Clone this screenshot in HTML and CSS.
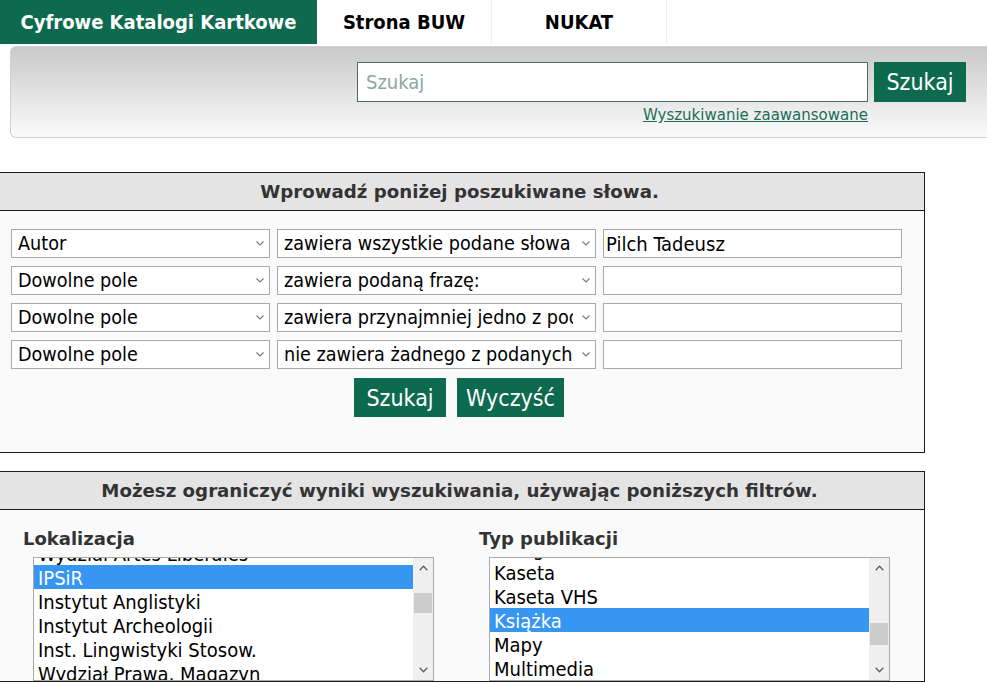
FILE: index.html
```html
<!DOCTYPE html>
<html lang="pl">
<head>
<meta charset="utf-8">
<title>Cyfrowe Katalogi Kartkowe</title>
<link rel="stylesheet" href="styles.css">
</head>
<body>
<nav class="topnav">
  <a class="tab tab-active" href="#">Cyfrowe Katalogi Kartkowe</a>
  <a class="tab" href="#">Strona BUW</a>
  <a class="tab" href="#">NUKAT</a>
</nav>

<header class="search-panel">
  <form class="quick-search">
    <input class="qs-input" type="text" placeholder="Szukaj">
    <button class="btn qs-btn" type="button">Szukaj</button>
    <a class="adv-link" href="#">Wyszukiwanie zaawansowane</a>
  </form>
</header>

<section class="box">
  <h2 class="box-head">Wprowadź poniżej poszukiwane słowa.</h2>
  <div class="query-body">
    <div class="qrows">
      <div class="qrow">
        <div class="sel sel-field"><select><option>Autor</option><option>Dowolne pole</option><option>Tytuł</option></select><svg class="chev" width="8" height="5" viewBox="0 0 8 5"><path d="M0.5 0.5 L4 4 L7.5 0.5" fill="none" stroke="#777" stroke-width="1.1"/></svg></div>
        <div class="sel sel-op"><select><option>zawiera wszystkie podane słowa</option></select><svg class="chev" width="8" height="5" viewBox="0 0 8 5"><path d="M0.5 0.5 L4 4 L7.5 0.5" fill="none" stroke="#777" stroke-width="1.1"/></svg></div>
        <input class="term" type="text" value="Pilch Tadeusz">
      </div>
      <div class="qrow">
        <div class="sel sel-field"><select><option>Dowolne pole</option></select><svg class="chev" width="8" height="5" viewBox="0 0 8 5"><path d="M0.5 0.5 L4 4 L7.5 0.5" fill="none" stroke="#777" stroke-width="1.1"/></svg></div>
        <div class="sel sel-op"><select><option>zawiera podaną frazę:</option></select><svg class="chev" width="8" height="5" viewBox="0 0 8 5"><path d="M0.5 0.5 L4 4 L7.5 0.5" fill="none" stroke="#777" stroke-width="1.1"/></svg></div>
        <input class="term" type="text">
      </div>
      <div class="qrow">
        <div class="sel sel-field"><select><option>Dowolne pole</option></select><svg class="chev" width="8" height="5" viewBox="0 0 8 5"><path d="M0.5 0.5 L4 4 L7.5 0.5" fill="none" stroke="#777" stroke-width="1.1"/></svg></div>
        <div class="sel sel-op"><select><option>zawiera przynajmniej jedno z podanych słów</option></select><svg class="chev" width="8" height="5" viewBox="0 0 8 5"><path d="M0.5 0.5 L4 4 L7.5 0.5" fill="none" stroke="#777" stroke-width="1.1"/></svg></div>
        <input class="term" type="text">
      </div>
      <div class="qrow">
        <div class="sel sel-field"><select><option>Dowolne pole</option></select><svg class="chev" width="8" height="5" viewBox="0 0 8 5"><path d="M0.5 0.5 L4 4 L7.5 0.5" fill="none" stroke="#777" stroke-width="1.1"/></svg></div>
        <div class="sel sel-op"><select><option>nie zawiera żadnego z podanych słów</option></select><svg class="chev" width="8" height="5" viewBox="0 0 8 5"><path d="M0.5 0.5 L4 4 L7.5 0.5" fill="none" stroke="#777" stroke-width="1.1"/></svg></div>
        <input class="term" type="text">
      </div>
    </div>
    <div class="actions">
      <button class="btn btn-search" type="button">Szukaj</button>
      <button class="btn btn-clear" type="button">Wyczyść</button>
    </div>
  </div>
</section>

<section class="box box-filters">
  <h2 class="box-head">Możesz ograniczyć wyniki wyszukiwania, używając poniższych filtrów.</h2>
  <div class="filters">
    <div class="filter">
      <h3 class="filter-label">Lokalizacja</h3>
      <div class="listbox">
        <ul class="lb-items lb-loc">
          <li>Wydział Artes Liberales</li>
          <li class="chosen">IPSiR</li>
          <li>Instytut Anglistyki</li>
          <li>Instytut Archeologii</li>
          <li>Inst. Lingwistyki Stosow.</li>
          <li>Wydział Prawa, Magazyn</li>
          <li>Wydział Polonistyki</li>
        </ul>
        <div class="lb-bar">
          <span class="lb-btn"><svg width="9" height="6" viewBox="0 0 9 6"><path d="M0.7 5.2 L4.5 1.2 L8.3 5.2" fill="none" stroke="#606060" stroke-width="1.3"/></svg></span>
          <span class="lb-track"><span class="lb-thumb" style="margin-top:15px;height:20px"></span></span>
          <span class="lb-btn"><svg width="9" height="6" viewBox="0 0 9 6"><path d="M0.7 0.8 L4.5 4.8 L8.3 0.8" fill="none" stroke="#606060" stroke-width="1.3"/></svg></span>
        </div>
      </div>
    </div>
    <div class="filter">
      <h3 class="filter-label">Typ publikacji</h3>
      <div class="listbox">
        <ul class="lb-items lb-type">
          <li>Fotografia</li>
          <li>Kaseta</li>
          <li>Kaseta VHS</li>
          <li class="chosen">Książka</li>
          <li>Mapy</li>
          <li>Multimedia</li>
          <li>Nuty</li>
        </ul>
        <div class="lb-bar">
          <span class="lb-btn"><svg width="9" height="6" viewBox="0 0 9 6"><path d="M0.7 5.2 L4.5 1.2 L8.3 5.2" fill="none" stroke="#606060" stroke-width="1.3"/></svg></span>
          <span class="lb-track"><span class="lb-thumb" style="margin-top:45px;height:22px"></span></span>
          <span class="lb-btn"><svg width="9" height="6" viewBox="0 0 9 6"><path d="M0.7 0.8 L4.5 4.8 L8.3 0.8" fill="none" stroke="#606060" stroke-width="1.3"/></svg></span>
        </div>
      </div>
    </div>
  </div>
</section>
</body>
</html>
```

FILE: styles.css
```css
* { box-sizing: border-box; }

body {
  margin: 0;
  background: #fff;
  color: #000;
  font-family: "DejaVu Sans", Verdana, sans-serif;
  overflow: hidden;
}

/* ---------- top navigation ---------- */
.topnav {
  display: flex;
  height: 44px;
}
.tab {
  display: flex;
  align-items: center;
  justify-content: center;
  width: 175px;
  border-right: 1px solid #eeeeee;
  color: #000;
  text-decoration: none;
  font-family: "DejaVu Sans Condensed", "DejaVu Sans", sans-serif;
  font-stretch: condensed;
  font-weight: bold;
  font-size: 20px;
}
.tab-active {
  width: 317px;
  background: #0e6a4e;
  color: #fff;
  border-right: 0;
}

/* ---------- quick search ---------- */
.search-panel {
  margin: 2px 0 0 10px;
  height: 92px;
  border: 1px solid #d2d2d2;
  border-right: 0;
  border-radius: 6px 0 0 6px;
  background: linear-gradient(#c9c9c9, #fbfbfb);
  display: flex;
  justify-content: flex-end;
  padding: 15px 21px 0 0;
}
.quick-search {
  display: grid;
  grid-template-columns: 511px 92px;
  column-gap: 6px;
  align-content: start;
}
.qs-input {
  height: 40px;
  border: 1px solid #4e6a61;
  background: #fff;
  padding: 0 8px;
  font-family: "DejaVu Sans Condensed", "DejaVu Sans", sans-serif;
  font-stretch: condensed;
  font-size: 20px;
  outline: none;
}
.qs-input::placeholder { color: #8ea79d; }
.qs-btn { height: 40px; }
.adv-link {
  grid-column: 1;
  justify-self: end;
  margin-top: 4px;
  font-size: 15px;
  line-height: 18px;
  color: #1e6c57;
  text-decoration: underline;
}

.btn {
  border: 0;
  padding: 0;
  background: #0e6a4e;
  color: #fff;
  font-family: "DejaVu Sans Condensed", "DejaVu Sans", sans-serif;
  font-stretch: condensed;
  font-size: 23px;
  cursor: pointer;
}

/* ---------- boxes ---------- */
.box {
  margin-top: 34px;
  width: 925px;
  border: 1px solid #1c1c1c;
  border-left: 0;
  background: #fafafa;
}
.box-filters { margin-top: 18px; }
.box-head {
  margin: 0;
  height: 38px;
  padding-right: 5px;
  display: flex;
  align-items: center;
  justify-content: center;
  background: #e4e4e4;
  border-bottom: 1px solid #1c1c1c;
  color: #333;
  font-size: 18.2px;
  font-weight: bold;
}

.query-body {
  padding: 18px 0 35px 11px;
}
.qrows {
  display: grid;
  row-gap: 8px;
}
.qrow {
  display: flex;
  gap: 7px;
}
.sel {
  position: relative;
  height: 29px;
}
.sel-field { width: 259px; }
.sel-op { width: 319px; }
.sel select {
  -webkit-appearance: none;
  appearance: none;
  width: 100%;
  height: 100%;
  border: 1px solid #a9a9a9;
  border-radius: 0;
  background: #fff;
  color: #000;
  padding: 0 22px 0 6px;
  font-family: "DejaVu Sans Condensed", "DejaVu Sans", sans-serif;
  font-stretch: condensed;
  font-size: 19.6px;
  outline: none;
}
.chev {
  position: absolute;
  right: 6px;
  top: 12px;
  pointer-events: none;
}
.term {
  width: 299px;
  height: 29px;
  border: 1px solid #a9a9a9;
  background: #fff;
  padding: 0 2px;
  font-family: "DejaVu Sans Condensed", "DejaVu Sans", sans-serif;
  font-stretch: condensed;
  font-size: 20px;
  outline: none;
}
.actions {
  display: flex;
  justify-content: center;
  gap: 11px;
  margin-top: 9px;
  padding-right: 17px;
}
.actions .btn { height: 39px; }
.btn-search { width: 92px; }
.btn-clear { width: 107px; }

/* ---------- filters ---------- */
.filters {
  display: grid;
  grid-template-columns: 456px 456px;
  padding: 18px 0 0 23px;
}
.filter-label {
  margin: 0 0 8px;
  color: #333;
  font-size: 18px;
  line-height: 21px;
  font-weight: bold;
}
.listbox {
  margin-left: 10px;
  width: 401px;
  height: 124px;
  border: 1px solid #a9a9a9;
  background: #fff;
  display: flex;
  overflow: hidden;
}
.lb-items {
  flex: 1;
  list-style: none;
  margin: 0;
  padding: 0;
  font-family: "DejaVu Sans Condensed", "DejaVu Sans", sans-serif;
  font-stretch: condensed;
  font-size: 20px;
}
.lb-loc { margin-top: -17px; }
.lb-type { margin-top: -22px; }
.lb-items li {
  height: 24px;
  line-height: 24px;
  padding: 1px 0 0 4px;
  white-space: nowrap;
}
.lb-items li.chosen {
  background: #3896f3;
  color: #fff;
}
.lb-bar {
  width: 20px;
  background: #f0f0f0;
  display: flex;
  flex-direction: column;
}
.lb-btn {
  height: 20px;
  display: flex;
  align-items: center;
  justify-content: center;
}
.lb-track {
  flex: 1;
  display: flex;
  flex-direction: column;
}
.lb-thumb {
  display: block;
  margin: 0 1px;
  background: #cdcdcd;
}
```
